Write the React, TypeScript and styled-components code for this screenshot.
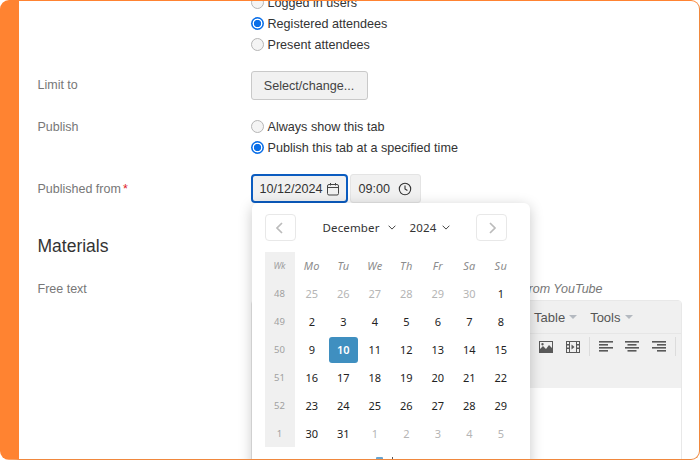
import React from "react";
import styled, { createGlobalStyle } from "styled-components";

const Global = createGlobalStyle`
  html, body { margin: 0; padding: 0; background: #fff; }
  * { box-sizing: border-box; }
`;
const Frame = styled.div`
  position: relative; width: 700px; height: 460px; overflow: hidden; background: #fff;
  border: 1px solid #f0883e; border-left: 19.5px solid #ff8331; border-top: 1px solid #ff8331;
  border-radius: 9px;
  font-family: "Liberation Sans", Arial, sans-serif; font-size: 12.6px; color: #333;
`;
const Form = styled.div`
  display: flex; flex-direction: column; padding-left: 18.5px; margin-top: -9px;
`;
const Row = styled.div<{ $h: number; $mb?: number }>`
  display: grid; grid-template-columns: 213px 1fr; min-height: ${p => p.$h}px; margin-bottom: ${p => p.$mb ?? 0}px;
`;
const Label = styled.div<{ $pt?: number }>`
  color: #777; font-size: 12.5px; line-height: 15px; padding-top: ${p => p.$pt ?? 0}px;
`;
const Req = styled.span`color: #e0222a; margin-left: 2px;`;
const Radios = styled.div`display: flex; flex-direction: column;`;
const RadioRow = styled.label`display: flex; align-items: center; height: 21px; gap: 4px; color: #333; font-size: 12.6px;`;
const Radio = styled.span<{ $on?: boolean }>`
  width: 13px; height: 13px; border-radius: 50%; flex: none;
  ${p => p.$on
    ? "background: radial-gradient(circle, #0b6fe8 0 3.4px, #fff 3.9px 4.7px, #0b6fe8 5.2px);"
    : "background:#f4f4f4; border: 1px solid #b5b5b5;"}
`;
const Button = styled.button`
  width: 117px; height: 29px; background: #f1f1f1; border: 1px solid #c9c9c9; border-radius: 3px;
  font: 12.6px "Liberation Sans", Arial, sans-serif; color: #444; padding: 0;
`;
const Inputs = styled.div`display: flex; gap: 2px; height: 29px;`;
const DateBox = styled.div`
  width: 97px; height: 29px; background: #f1f1f1; border: 2px solid #0b5cc0; border-radius: 4px;
  display: flex; align-items: center; justify-content: space-between; padding: 0 6px 0 7px; color: #333; font-size: 12.6px;
`;
const TimeBox = styled.div`
  width: 71px; height: 29px; background: #f1f1f1; border: 1px solid #e4e4e4; border-radius: 3px;
  display: flex; align-items: center; justify-content: space-between; padding: 0 8px 0 8px; color: #333; font-size: 12.6px;
`;
const Heading = styled.h2`
  margin: 0 0 25px; font-size: 17.5px; font-weight: 400; line-height: 22px; color: #333;
`;
const Hint = styled.div`
  font-style: italic; color: #777; font-size: 12.5px; line-height: 15px; text-align: right; width: 352px; margin-bottom: 3px;
`;
const Editor = styled.div`
  width: 431px; height: 200px; border: 1px solid #e8e8e8; border-radius: 4px 4px 0 0; background: #fff;
`;
const MenuBar = styled.div`
  height: 33px; background: #f0f0f0; border-bottom: 1px solid #e6e6e6; display: flex; align-items: center; justify-content: flex-end; gap: 13px; padding-right: 48px; color: #555; font-size: 13px;
`;
const MenuItem = styled.span`display: inline-flex; align-items: center; gap: 4px;`;
const Caret = styled.i`width: 0; height: 0; border: 4px solid transparent; border-top-color: #b4b9c0; border-bottom: 0;`;
const ToolBar = styled.div`
  height: 54px; background: #f0f0f0; display: flex; align-items: flex-start; justify-content: flex-end; gap: 5.5px; padding: 3px 5px 0 0;
`;
const Tool = styled.span`width: 21px; height: 19px; display: inline-flex; align-items: center; justify-content: center; color: #595959;`;
const Sep = styled.span`width: 1px; height: 19px; background: #dcdcdc;`;

const Popup = styled.div`
  position: absolute; left: 232.5px; top: 202px; width: 278px; height: 270px; background: #fff; border-radius: 6px;
  box-shadow: 0 3px 14px rgba(0,0,0,.22); padding: 11px 13px 0 13px;
  font-family: "Noto Sans", "Open Sans", sans-serif; color: #333;
`;
const Nav = styled.div`display: flex; justify-content: space-between; align-items: center; width: 243px; height: 27px; margin-bottom: 11px;`;
const NavBtn = styled.span`
  width: 31px; height: 27px; border: 1px solid #e8e8e8; border-radius: 4px; display: flex; align-items: center; justify-content: center; color: #bbb;
`;
const Selects = styled.div`display: flex; align-items: center; gap: 14px; font-size: 11.5px; letter-spacing: .15px; color: #333;`;
const Sel = styled.span<{ $gap: number }>`display: inline-flex; align-items: center; gap: ${p => p.$gap}px;`;
const Grid = styled.div`
  display: grid; grid-template-columns: 31.6px repeat(7, 31.5px); grid-template-rows: 28px; grid-auto-rows: 27.9px;
`;
const WkCell = styled.div<{ $head?: boolean }>`
  background: #f0f0f0; color: #a0a0a0; margin-right: 1.6px; font-size: ${p => (p.$head ? 9 : 9.5)}px; font-style: ${p => (p.$head ? "italic" : "normal")};
  display: flex; align-items: center; justify-content: center; padding-bottom: ${p => (p.$head ? 2 : 0)}px;
`;
const Head = styled.div`font-size: 11px; font-style: italic; color: #8c8c8c; display: flex; align-items: center; justify-content: center; letter-spacing: .3px; padding-bottom: 2px;`;
const Day = styled.div<{ $muted?: boolean; $sel?: boolean }>`
  display: flex; align-items: center; justify-content: center; font-size: 11px;
  color: ${p => (p.$sel ? "#fff" : p.$muted ? "#b5b5b5" : "#222")};
  ${p => p.$sel ? "background:#3f8fc0; border-radius:3px; margin: 1px 1px; font-weight:600;" : ""}
`;
const TodayBit = styled.div`position: absolute; left: 124px; top: 254px; display: flex; gap: 9px; align-items: flex-start;`;
const TodaySq = styled.i`width: 7px; height: 7px; background: #6aa5cf; border-radius: 1px;`;
const TodayTick = styled.i`width: 1px; height: 4px; background: #555;`;

const Calendar = () => (
  <svg width="14" height="14" viewBox="0 0 14 14" fill="none" stroke="#444" strokeWidth="1"><rect x="1.5" y="2.5" width="11" height="10.5" rx="1.5"/><path d="M1.5 5.5h11M4.5 1v2.5M9.5 1v2.5"/></svg>
);
const Clock = () => (
  <svg width="14" height="14" viewBox="0 0 14 14" fill="none" stroke="#333" strokeWidth="1.1"><circle cx="7" cy="7" r="5.7"/><path d="M7 3.5V7l2.4 1.5"/></svg>
);
const Chevron = ({ d }: { d: string }) => (
  <svg width="12" height="12" viewBox="0 0 12 12" fill="none" stroke="currentColor" strokeWidth="1.7"><path d={d}/></svg>
);
const Down = () => (
  <svg width="8" height="5" viewBox="0 0 8 5" fill="none" stroke="#444" strokeWidth="1"><path d="M.6.7L4 4.1 7.4.7"/></svg>
);
const ImgIcon = () => (
  <svg width="14" height="12" viewBox="0 0 14 12"><path fill="#595959" fillRule="evenodd" d="M0 0h14v12H0zM1 1v7l3-3 3 3 3-4 3 3V1zM3.5 2a1.2 1.2 0 1 0 .01 0z"/></svg>
);
const FilmIcon = () => (
  <svg width="14" height="12" viewBox="0 0 14 12"><path fill="#595959" fillRule="evenodd" d="M0 0h14v12H0zM1 1v2h2V1zM1 4.5v2h2v-2zM1 8v3h2V8zM11 1v2h2V1zM11 4.5v2h2v-2zM11 8v3h2V8zM4 1v10h6V1z"/><path fill="#595959" d="M5.5 3.5l3 2.5-3 2.5z"/></svg>
);
const Align = ({ kind }: { kind: "l" | "c" | "r" }) => {
  const x = (w: number) => (kind === "l" ? 0 : kind === "r" ? 14 - w : (14 - w) / 2);
  const rows = [14, 9, 14, 9];
  return (
    <svg width="14" height="11" viewBox="0 0 14 11" fill="#595959">
      {rows.map((w, i) => <rect key={i} x={x(w)} y={i * 3} width={w} height="1.6" />)}
    </svg>
  );
};

const prev = [25, 26, 27, 28, 29, 30];
type Cell = { n: number; muted?: boolean; sel?: boolean };
const weeks: { wk: number; days: Cell[] }[] = [
  { wk: 48, days: [...prev.map(n => ({ n, muted: true })), { n: 1 }] },
  { wk: 49, days: [2, 3, 4, 5, 6, 7, 8].map(n => ({ n })) },
  { wk: 50, days: [9, 10, 11, 12, 13, 14, 15].map(n => ({ n, sel: n === 10 })) },
  { wk: 51, days: [16, 17, 18, 19, 20, 21, 22].map(n => ({ n })) },
  { wk: 52, days: [23, 24, 25, 26, 27, 28, 29].map(n => ({ n })) },
  { wk: 1, days: [{ n: 30 }, { n: 31 }, ...[1, 2, 3, 4, 5].map(n => ({ n, muted: true }))] },
];

export default function App() {
  return (
    <Frame>
      <Global />
      <Form>
        <Row $h={63} $mb={16}>
          <div />
          <Radios>
            <RadioRow><Radio />Logged in users</RadioRow>
            <RadioRow><Radio $on />Registered attendees</RadioRow>
            <RadioRow><Radio />Present attendees</RadioRow>
          </Radios>
        </Row>
        <Row $h={29} $mb={16}>
          <Label $pt={7}>Limit to</Label>
          <div><Button>Select/change...</Button></div>
        </Row>
        <Row $h={42} $mb={16}>
          <Label $pt={4}>Publish</Label>
          <Radios>
            <RadioRow><Radio />Always show this tab</RadioRow>
            <RadioRow><Radio $on />Publish this tab at a specified time</RadioRow>
          </Radios>
        </Row>
        <Row $h={29} $mb={32}>
          <Label $pt={8}>Published from<Req>*</Req></Label>
          <Inputs>
            <DateBox>10/12/2024<Calendar /></DateBox>
            <TimeBox>09:00<Clock /></TimeBox>
          </Inputs>
        </Row>
        <Heading>Materials</Heading>
        <Row $h={200}>
          <Label>Free text</Label>
          <div>
            <Hint>from YouTube</Hint>
            <Editor>
              <MenuBar>
                <MenuItem>Table<Caret /></MenuItem>
                <MenuItem>Tools<Caret /></MenuItem>
              </MenuBar>
              <ToolBar>
                <Tool><ImgIcon /></Tool>
                <Tool><FilmIcon /></Tool>
                <Sep />
                <Tool><Align kind="l" /></Tool>
                <Tool><Align kind="c" /></Tool>
                <Tool><Align kind="r" /></Tool>
                <Sep />
              </ToolBar>
            </Editor>
          </div>
        </Row>
      </Form>
      <Popup>
        <Nav>
          <NavBtn><Chevron d="M8 1L3 6l5 5" /></NavBtn>
          <Selects>
            <Sel $gap={8}>December<Down /></Sel>
            <Sel $gap={5}>2024<Down /></Sel>
          </Selects>
          <NavBtn><Chevron d="M4 1l5 5-5 5" /></NavBtn>
        </Nav>
        <Grid>
          <WkCell $head>Wk</WkCell>
          {["Mo", "Tu", "We", "Th", "Fr", "Sa", "Su"].map(d => <Head key={d}>{d}</Head>)}
          {weeks.map(w => (
            <React.Fragment key={w.wk}>
              <WkCell>{w.wk}</WkCell>
              {w.days.map((c, i) => <Day key={i} $muted={c.muted} $sel={c.sel}>{c.n}</Day>)}
            </React.Fragment>
          ))}
        </Grid>
        <TodayBit><TodaySq /><TodayTick /></TodayBit>
      </Popup>
    </Frame>
  );
}
